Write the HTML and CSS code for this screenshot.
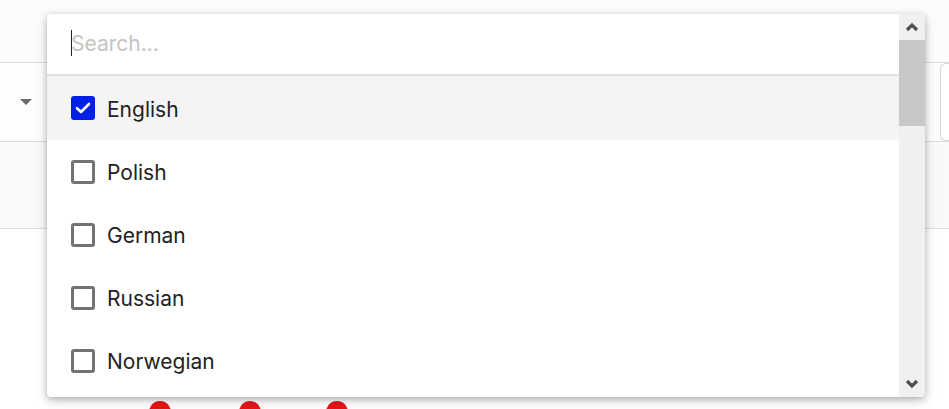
FILE: index.html
```html
<!DOCTYPE html>
<html>
<head>
<meta charset="utf-8">
<link rel="stylesheet" href="styles.css">
</head>
<body>
<div class="page">
  <div class="topbar"></div>
  <div class="filter-row">
    <div class="select-end">
      <svg width="14" height="8" viewBox="0 0 14 8"><path d="M1 1h12L7 7z" fill="#6b6b6b"/></svg>
    </div>
    <div class="spacer"></div>
    <div class="side-input"></div>
  </div>
  <div class="band"></div>
  <div class="content">
    <div class="dots">
      <span class="dot"></span><span class="dot"></span><span class="dot"></span>
    </div>
  </div>
</div>

<div class="popup">
  <div class="list">
    <div class="search"><span class="caret"></span><span class="placeholder">Search...</span></div>
    <div class="item active"><span class="box checked"><svg width="16" height="12" viewBox="0 0 16 12"><path d="M2 6.2l4 3.8L14 2" fill="none" stroke="#fff" stroke-width="2.6" stroke-linecap="round" stroke-linejoin="round"/></svg></span><span class="label">English</span></div>
    <div class="item"><span class="box"></span><span class="label">Polish</span></div>
    <div class="item"><span class="box"></span><span class="label">German</span></div>
    <div class="item"><span class="box"></span><span class="label">Russian</span></div>
    <div class="item"><span class="box"></span><span class="label">Norwegian</span></div>
  </div>
  <div class="scrollbar">
    <div class="arrow"><svg width="14" height="10" viewBox="0 0 14 10"><path d="M2 8L7 3l5 5" fill="none" stroke="#505050" stroke-width="3.2"/></svg></div>
    <div class="track"><div class="thumb"></div></div>
    <div class="arrow"><svg width="14" height="10" viewBox="0 0 14 10"><path d="M2 2l5 5 5-5" fill="none" stroke="#505050" stroke-width="3.2"/></svg></div>
  </div>
</div>
</body>
</html>
```
FILE: styles.css
```css
html, body {
  margin: 0;
  padding: 0;
  background: #fff;
  font-family: Inter, "Noto Sans", sans-serif;
  overflow: hidden;
}
.page {
  width: 949px;
  height: 409px;
  display: flex;
  flex-direction: column;
}
.topbar {
  height: 62px;
  background: #fcfcfd;
  border-bottom: 1px solid #dcdcdc;
  flex: none;
}
.filter-row {
  height: 78px;
  background: #fdfdfd;
  border-bottom: 1px solid #dcdcdc;
  display: flex;
  align-items: stretch;
  flex: none;
}
.select-end {
  width: 47px;
  display: flex;
  align-items: center;
  padding-left: 19px;
  box-sizing: border-box;
}
.spacer { flex: 1; }
.side-input {
  width: 8px;
  border: 1px solid #d6d6d6;
  border-right: none;
  border-radius: 6px 0 0 6px;
  background: #fff;
}
.band {
  height: 86px;
  background: #f8f9fb;
  border-bottom: 1px solid #dcdcdc;
  flex: none;
}
.content {
  flex: 1;
  position: relative;
}
.dots {
  position: absolute;
  left: 149px;
  top: 172px;
  display: flex;
  gap: 68px;
}
.dots .dot {
  width: 22px;
  height: 22px;
  border-radius: 50%;
  background: #e8141b;
}
.dots .dot:nth-child(3) { margin-left: -3px; }

.popup {
  position: absolute;
  left: 47px;
  top: 14px;
  width: 878px;
  height: 383px;
  background: #fff;
  border-radius: 4px;
  box-shadow: 0 2px 6px rgba(0,0,0,0.25), 0 4px 14px rgba(0,0,0,0.12);
  display: flex;
  overflow: hidden;
}
.list {
  flex: 1;
  display: flex;
  flex-direction: column;
}
.search {
  height: 60px;
  border-bottom: 2px solid #e2e2e2;
  display: flex;
  align-items: center;
  padding-left: 24px;
  flex: none;
  position: relative;
}
.caret {
  position: absolute;
  left: 24px;
  top: 16px;
  width: 1px;
  height: 26px;
  background: #222;
}
.placeholder {
  font-size: 21px;
  color: #c4c4c4;
  margin-top: -1px;
}
.item {
  height: 63px;
  display: flex;
  align-items: center;
  padding-left: 24px;
  flex: none;
}
.item.active {
  background: #f4f4f4;
  height: 64px;
}
.box {
  width: 24px;
  height: 24px;
  box-sizing: border-box;
  border: 3px solid #737373;
  border-radius: 3px;
  display: flex;
  align-items: center;
  justify-content: center;
  flex: none;
}
.box.checked {
  background: #0020e6;
  border: none;
}
.label {
  margin-left: 12px;
  margin-top: 2px;
  font-size: 21px;
  color: #222;
}
.scrollbar {
  width: 26px;
  background: #f0f0f0;
  display: flex;
  flex-direction: column;
}
.arrow {
  height: 26px;
  display: flex;
  align-items: center;
  justify-content: center;
  flex: none;
}
.track { flex: 1; }
.thumb {
  height: 86px;
  background: #c8c8c8;
}
```
